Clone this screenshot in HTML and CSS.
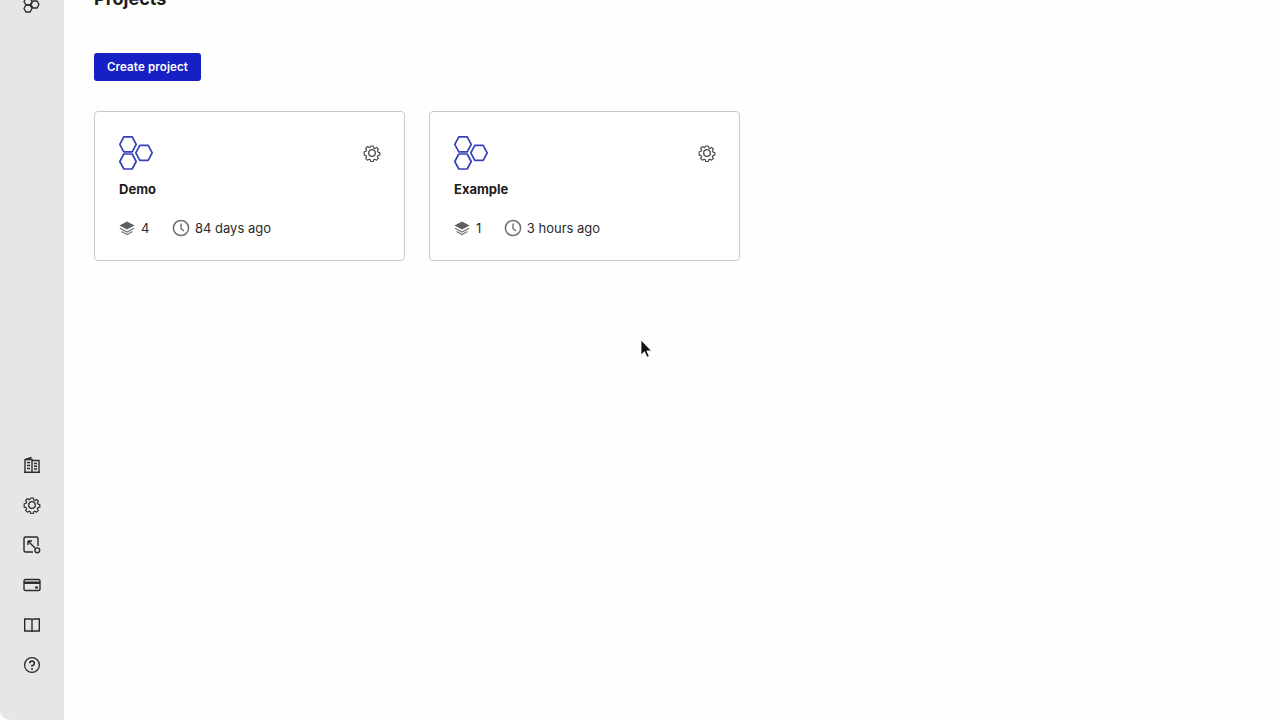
FILE: index.html
```html
<!DOCTYPE html>
<html lang="en">
<head>
    <meta charset="UTF-8">
    <title>Projects</title>
    <link rel="stylesheet" href="styles.css">
</head>
<body>
    <svg width="0" height="0" class="defs">
        <defs>
            <symbol id="gear" viewBox="0 0 18 18">
                <path fill="none" stroke="currentColor" stroke-width="1.300" stroke-linejoin="round" d="M7.600 1.200h2.800l.5 2.100 1.300.6 1.900-1.100 2 2-1.100 1.900.6 1.300 2.100.5v2.800l-2.100.5-.6 1.300 1.100 1.900-2 2-1.900-1.100-1.300.6-.5 2.100H7.600l-.5-2.100-1.300-.6-1.900 1.100-2-2 1.100-1.900-.6-1.300-2.100-.5V7.600l2.100-.5.6-1.300-1.100-1.900 2-2 1.900 1.100 1.300-.6z" transform="translate(.9 .9) scale(.9)"/>
                <circle cx="9" cy="9" r="3.300" fill="none" stroke="currentColor" stroke-width="1.300"/>
            </symbol>
            <symbol id="hexes" viewBox="0 0 34 34">
                <g fill="none" stroke="currentColor" stroke-width="1.700" stroke-linejoin="round">
                    <path d="M.8 8.300 4.800.8h8.400l4 7.500-4 7.500H4.800z"/>
                    <path d="M16.800 16.800l4-7.500h8.400l4 7.500-4 7.500h-8.400z"/>
                    <path d="M.8 25.500l4-7.500h8.400l4 7.500-4 7.500H4.800z"/>
                </g>
            </symbol>
            <symbol id="layers" viewBox="0 0 16 16">
                <path fill="#5f5f5f" d="M8 1.500 15.500 5.500 8 9.500.5 5.500z"/>
                <path fill="none" stroke="#777" stroke-width="1.300" d="M1 8.300 8 12l7-3.700M2.500 11.500 8 14.600l5.500-3.100"/>
            </symbol>
            <symbol id="clock" viewBox="0 0 18 18">
                <circle cx="9" cy="9" r="7.600" fill="none" stroke="#707070" stroke-width="1.500"/>
                <path fill="none" stroke="#707070" stroke-width="1.400" d="M9 4.500V9.500l3 2.500"/>
            </symbol>
        </defs>
    </svg>

    <div class="app">
        <!-- Sidebar -->
        <nav class="sidebar">
            <svg class="nav-icon nav-top" width="18" height="18" viewBox="0 0 18 18">
                <g fill="none" stroke="currentColor" stroke-width="1.300">
                    <path d="M1 2.500 3 -1h4l2 3.500L7 6H3z"/>
                    <path d="M8 5.500 10 2h4l2 3.500L14 9h-4z"/>
                    <path d="M1 9.500 3 6h4l2 3.500L7 13H3z"/>
                </g>
            </svg>
            <div class="nav-bottom">
                <svg class="nav-icon" width="18" height="18" viewBox="0 0 18 18">
                    <g fill="none" stroke="currentColor" stroke-width="1.400">
                        <path d="M1 16.300h16M2 16.300V3.500L8.500 1.500M2 3.500h7v12.800M9 4.500h7v11.800"/>
                    </g>
                    <g fill="none" stroke="currentColor" stroke-width="1.500">
                        <path d="M4 6.500h3M4 9.500h3M4 12.500h3M11 7.500h3M11 10.300h3M11 13h3"/>
                    </g>
                </svg>
                <svg class="nav-icon" width="18" height="18"><use href="#gear"/></svg>
                <svg class="nav-icon" width="18" height="18" viewBox="0 0 18 18">
                    <g fill="none" stroke="currentColor" stroke-width="1.400">
                        <path d="M10 16H2.500A1.500 1.500 0 0 1 1 14.500v-12A1.500 1.500 0 0 1 2.500 1h11A1.500 1.500 0 0 1 15 2.500V10"/>
                        <path d="M5 5l7 7M5 5h4M5 5v4"/>
                        <circle cx="14.300" cy="14.300" r="2.400"/>
                    </g>
                </svg>
                <svg class="nav-icon" width="18" height="18" viewBox="0 0 18 18">
                    <rect x="1" y="3.500" width="16" height="11" rx="1.500" fill="none" stroke="currentColor" stroke-width="1.400"/>
                    <rect x="1" y="5.500" width="16" height="2.500" fill="currentColor"/>
                    <rect x="12" y="10.500" width="3" height="2" fill="currentColor"/>
                </svg>
                <svg class="nav-icon" width="18" height="18" viewBox="0 0 18 18">
                    <path fill="none" stroke="currentColor" stroke-width="1.400" d="M1.700 3h5.800C8.300 3 9 3.700 9 4.500 9 3.700 9.700 3 10.500 3h5.800v12h-5.800c-.8 0-1.500.5-1.500 1 0-.5-.7-1-1.500-1H1.700zM9 4.500V16"/>
                </svg>
                <svg class="nav-icon" width="18" height="18" viewBox="0 0 18 18">
                    <circle cx="9" cy="9" r="7.400" fill="none" stroke="currentColor" stroke-width="1.300"/>
                    <path fill="none" stroke="currentColor" stroke-width="1.500" d="M6.700 7.200A2.300 2.300 0 1 1 9 9.500v1.300"/>
                    <circle cx="9" cy="12.900" r="1" fill="currentColor"/>
                </svg>
            </div>
        </nav>

        <!-- Projects -->
        <main class="content">
            <h1 class="title">Projects</h1>
            <button class="create-btn">Create project</button>

            <div class="cards">
                <div class="card">
                    <div class="card-top">
                        <svg class="hex-icon" width="34" height="34"><use href="#hexes"/></svg>
                        <svg class="card-gear" width="18" height="18"><use href="#gear"/></svg>
                    </div>
                    <div class="card-name">Demo</div>
                    <div class="card-meta">
                        <span class="meta-item meta-count"><svg width="16" height="16"><use href="#layers"/></svg>4</span>
                        <span class="meta-item"><svg width="18" height="18"><use href="#clock"/></svg>84 days ago</span>
                    </div>
                </div>
                <div class="card">
                    <div class="card-top">
                        <svg class="hex-icon" width="34" height="34"><use href="#hexes"/></svg>
                        <svg class="card-gear" width="18" height="18"><use href="#gear"/></svg>
                    </div>
                    <div class="card-name">Example</div>
                    <div class="card-meta">
                        <span class="meta-item meta-count"><svg width="16" height="16"><use href="#layers"/></svg>1</span>
                        <span class="meta-item"><svg width="18" height="18"><use href="#clock"/></svg>3 hours ago</span>
                    </div>
                </div>
            </div>
        </main>
    </div>

    <!-- Mouse pointer -->
    <svg class="cursor" width="14" height="20" viewBox="0 0 14 20">
        <path fill="#111" stroke="#fff" stroke-width=".8" d="M1 1v15l3.500-3.300 2.500 5.500 2.300-1-2.500-5.300H11.500z"/>
    </svg>
</body>
</html>
```

FILE: styles.css
```css
/* Page */
html, body {
    height: 100%;
}

body {
    margin: 0;
    overflow: hidden;
    background-color: #fefefd;
    color: #1c1c1c;
    font-family: "Inter", "Liberation Sans", sans-serif;
}

.defs {
    position: absolute;
}

.app {
    display: flex;
    height: 720px;
}

/* Sidebar */
.sidebar {
    display: flex;
    flex-direction: column;
    justify-content: space-between;
    align-items: center;
    width: 64px;
    flex-shrink: 0;
    background-color: #e6e6e5;
    border-bottom-left-radius: 10px;
    box-sizing: border-box;
    padding-bottom: 46px;
}

.nav-icon {
    display: block;
    color: #2b2b2b;
}

.nav-top {
    margin-top: -1px;
}

.nav-bottom {
    display: flex;
    flex-direction: column;
    gap: 22px;
}

/* Content */
.content {
    flex: 1;
    padding-left: 30px;
}

.title {
    margin: -13px 0 0;
    height: 24px;
    line-height: 24px;
    font-size: 18px;
    font-weight: 700;
}

.create-btn {
    display: block;
    width: 107px;
    height: 28px;
    margin-top: 42px;
    padding: 0;
    border: none;
    border-radius: 3px;
    background-color: #1720c4;
    color: #fff;
    font-family: inherit;
    font-size: 11.5px;
    font-weight: 600;
    letter-spacing: .15px;
}

.cards {
    display: flex;
    gap: 24px;
    margin-top: 30px;
}

.card {
    width: 311px;
    height: 150px;
    box-sizing: border-box;
    padding: 24px 24px 0;
    background-color: #fff;
    border: 1px solid #c9c9c9;
    border-radius: 4px;
}

.card-top {
    display: flex;
    justify-content: space-between;
    align-items: center;
    height: 34px;
}

.hex-icon {
    display: block;
    color: #3640b8;
}

.card-gear {
    display: block;
    margin-right: -1px;
    color: #4a4a4a;
}

.card-name {
    margin-top: 9px;
    height: 20px;
    line-height: 20px;
    font-size: 13px;
    font-weight: 700;
}

.card-meta {
    display: flex;
    gap: 23px;
    margin-top: 19px;
    height: 20px;
    font-size: 13px;
    color: #2a2a2a;
}

.meta-item {
    display: flex;
    align-items: center;
    gap: 4.5px;
}

.meta-count {
    gap: 6px;
}

/* Pointer */
.cursor {
    position: absolute;
    left: 640px;
    top: 339px;
}
```
